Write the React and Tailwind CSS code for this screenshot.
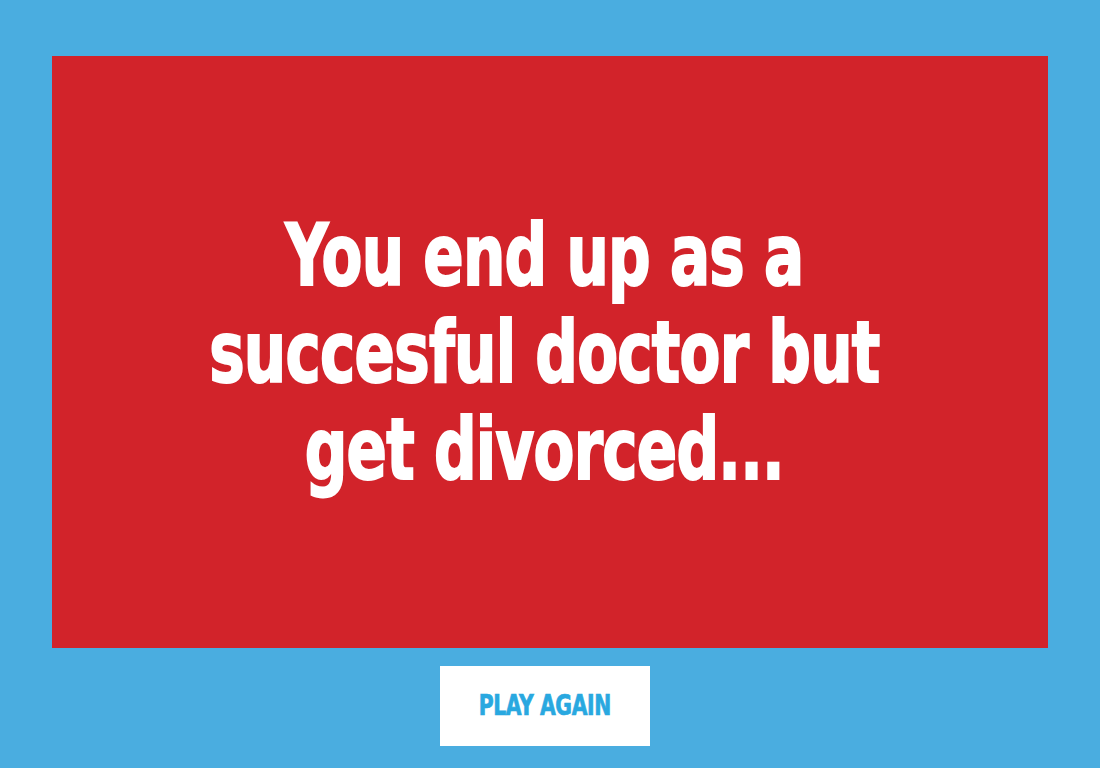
export default function App() {
  return (
    <div className="min-h-screen w-full bg-[#4aade0] px-[52px] pt-[56px] pb-[22px]" style={{ fontFamily: '"DejaVu Sans Condensed", "DejaVu Sans", sans-serif' }}>
      <div className="h-[592px] bg-[#d2232a] flex items-center justify-center">
        <h1 className="text-white font-bold text-center text-[86px] leading-[97px] tracking-[-1px] scale-x-[0.77] mt-[0px] mr-[12px] [-webkit-text-stroke:2px_white]">
          You end up as a<br />
          succesful doctor but<br />
          get divorced...
        </h1>
      </div>
      <div className="flex justify-center mt-[18px] mr-[10px]">
        <button className="w-[210px] h-[80px] bg-white text-[#29a8e0] font-bold text-[29px] tracking-[-0.5px]">
          <span className="inline-block scale-x-[0.78] [-webkit-text-stroke:0.7px_#29a8e0]">PLAY AGAIN</span>
        </button>
      </div>
    </div>
  );
}
